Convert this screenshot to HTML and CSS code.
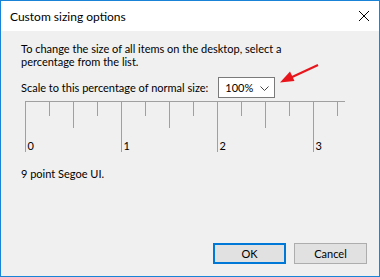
FILE: index.html
```html
<!DOCTYPE html>
<html lang="en">
<head>
  <meta charset="UTF-8" />
  <title>Custom sizing options</title>
  <link rel="stylesheet" href="styles.css">
</head>
<body>
  <div class="window">
    <div class="titlebar">
      <span class="title">Custom sizing options</span>
      <svg class="close" width="12" height="12" viewBox="0 0 12 12">
        <path d="M1 1 L11 11 M11 1 L1 11" stroke="#000" stroke-width="1" fill="none" />
      </svg>
    </div>
    <div class="content">
      <p class="intro">To change the size of all items on the desktop, select a percentage from the list.</p>
      <div class="scale-row">
        <span>Scale to this percentage of normal size:</span>
        <div class="combo">
          <span>100%</span>
          <svg width="9" height="5" viewBox="0 0 9 5">
            <path d="M0.5 0.5 L4.5 4.5 L8.5 0.5" stroke="#444" stroke-width="1" fill="none" />
          </svg>
        </div>
      </div>

      <!-- ruler: 96px per inch, tick every 24px -->
      <svg class="ruler" width="322" height="54" viewBox="0 0 322 54">
        <g stroke="#a0a0a0" stroke-width="1">
          <line x1="0" y1="0.5" x2="320" y2="0.5" />
          <line x1="0.5" y1="0" x2="0.5" y2="51" />
          <line x1="24.5" y1="0" x2="24.5" y2="15" />
          <line x1="48.5" y1="0" x2="48.5" y2="27" />
          <line x1="72.5" y1="0" x2="72.5" y2="15" />
          <line x1="96.5" y1="0" x2="96.5" y2="51" />
          <line x1="120.5" y1="0" x2="120.5" y2="15" />
          <line x1="144.5" y1="0" x2="144.5" y2="27" />
          <line x1="168.5" y1="0" x2="168.5" y2="15" />
          <line x1="192.5" y1="0" x2="192.5" y2="51" />
          <line x1="216.5" y1="0" x2="216.5" y2="15" />
          <line x1="240.5" y1="0" x2="240.5" y2="27" />
          <line x1="264.5" y1="0" x2="264.5" y2="15" />
          <line x1="288.5" y1="0" x2="288.5" y2="51" />
          <line x1="312.5" y1="0" x2="312.5" y2="15" />
        </g>
        <g class="ruler-labels">
          <text x="2.5" y="49">0</text>
          <text x="98.5" y="49">1</text>
          <text x="194.5" y="49">2</text>
          <text x="290.5" y="49">3</text>
        </g>
      </svg>

      <p class="sample">9 point Segoe UI.</p>

      <div class="buttons">
        <button class="btn btn-default">OK</button>
        <button class="btn">Cancel</button>
      </div>
    </div>

    <svg class="arrow" width="46" height="28" viewBox="0 0 46 28">
      <line x1="42" y1="5" x2="14" y2="18" stroke="#e8161c" stroke-width="2.2" />
      <polygon points="4,22.5 14,11.5 18.5,21" fill="#e8161c" />
    </svg>
  </div>
</body>
</html>
```

FILE: styles.css
```css
/* dialog window */
body {
  margin: 0;
  background: #fff;
  font-family: Lato, "Noto Sans", Arial, sans-serif;
  font-size: 11px;
  color: #000;
}
.window {
  position: relative;
  width: 380px;
  height: 277px;
  box-sizing: border-box;
  border: 1px solid #1883d7;
  background: #f0f0f0;
  display: flex;
  flex-direction: column;
}
.titlebar {
  height: 30px;
  background: #fff;
  display: flex;
  align-items: center;
  justify-content: space-between;
  padding: 0 9px 0 9px;
}
.title { font-size: 12px; line-height: 16px; padding-top: 1px; }
.close { display: block; }

.content {
  flex: 1;
  display: flex;
  flex-direction: column;
  padding: 0 12px 0 20px;
}
.intro {
  margin: 11px 0 0;
  line-height: 13px;
  width: 300px;
}
.scale-row {
  display: flex;
  align-items: center;
  gap: 10px;
  margin-top: 9px;
}
.combo {
  width: 57px;
  height: 21px;
  box-sizing: border-box;
  border: 1px solid #7a7a7a;
  background: #fff;
  display: flex;
  align-items: center;
  justify-content: space-between;
  padding: 0 5px 0 6px;
}
.combo svg { display: block; margin-top: 1px; }

.ruler { display: block; margin: 3px 0 0 4px; }
.ruler-labels { font-family: Lato, "Noto Sans", Arial, sans-serif; font-size: 11px; fill: #000; }

.sample {
  margin: 11px 0 0;
  line-height: 16px;
}

.buttons {
  margin-top: auto;
  margin-bottom: 12px;
  display: flex;
  justify-content: flex-end;
  gap: 8px;
}
.btn {
  width: 73px;
  height: 21px;
  box-sizing: border-box;
  border: 1px solid #adadad;
  background: #e1e1e1;
  font-family: Lato, "Noto Sans", Arial, sans-serif;
  font-size: 11px;
  padding: 0;
  color: #000;
}
.btn-default { border: 2px solid #0078d7; }

.arrow {
  position: absolute;
  left: 275px;
  top: 59px;
}
```
